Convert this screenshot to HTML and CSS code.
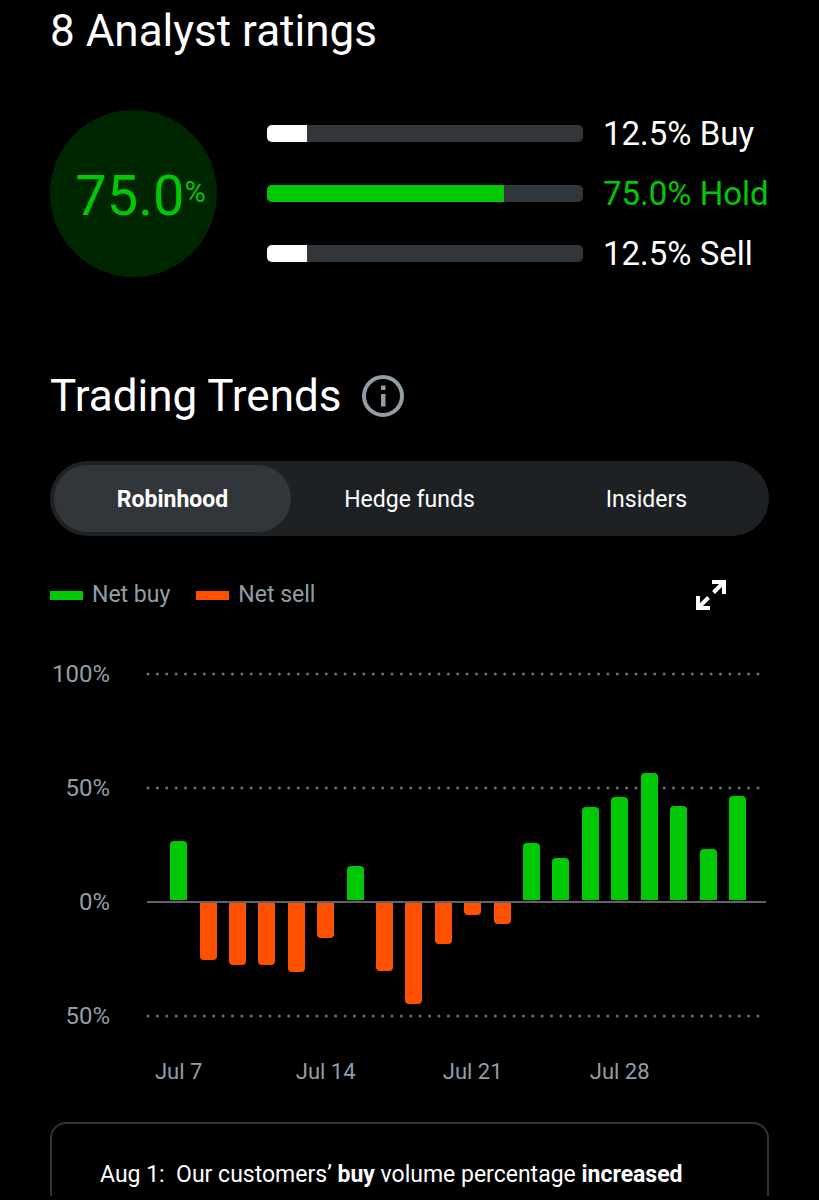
FILE: index.html
```html
<!DOCTYPE html>
<html lang="en">
<head>
    <meta charset="UTF-8">
    <meta name="viewport" content="width=device-width, initial-scale=1.0">
    <title>Analyst ratings</title>
    <link rel="stylesheet" href="styles.css">
</head>
<body>
    <main class="container">
        <section class="ratings">
            <h2 class="title">8 Analyst ratings</h2>
            <div class="ratings-body">
                <div class="score">75.0<span class="score-unit">%</span></div>
                <div class="rating-list">
                    <div class="track"><div class="fill" style="width: 12.5%"></div></div>
                    <span class="rating-label">12.5% Buy</span>
                    <div class="track"><div class="fill fill-top" style="width: 75%"></div></div>
                    <span class="rating-label rating-label-top">75.0% Hold</span>
                    <div class="track"><div class="fill" style="width: 12.5%"></div></div>
                    <span class="rating-label">12.5% Sell</span>
                </div>
            </div>
        </section>

        <section class="trends">
            <div class="trends-header">
                <h2 class="title">Trading Trends</h2>
                <button class="icon-btn" aria-label="About trading trends">
                    <svg width="42" height="42" viewBox="0 0 42 42">
                        <circle cx="21" cy="21" r="19" fill="none" stroke="#919ea6" stroke-width="4"/>
                        <path d="M19 10.500h4.500v4.500h-4.500zM19 19h4.500v12.500h-4.500z" fill="#919ea6"/>
                    </svg>
                </button>
            </div>

            <div class="tabs" role="tablist">
                <button class="tab active" role="tab" aria-selected="true">Robinhood</button>
                <button class="tab" role="tab" aria-selected="false">Hedge funds</button>
                <button class="tab" role="tab" aria-selected="false">Insiders</button>
            </div>

            <div class="legend">
                <span class="legend-item"><span class="swatch buy"></span>Net buy</span>
                <span class="legend-item"><span class="swatch sell"></span>Net sell</span>
                <button class="icon-btn expand" aria-label="Expand chart">
                    <svg width="30" height="30" viewBox="0 0 30 30" fill="none" stroke="#fff" stroke-width="4">
                        <path d="M16 2h12v12M28 2L17.500 12.500M2 16v12h12M2 28l10.500-10.500"/>
                    </svg>
                </button>
            </div>

            <div class="chart">
                <div class="grid-row">
                    <span class="y-label">100%</span>
                    <svg class="dots"><line x1="1" y1="2" x2="100%" y2="2" pathLength="65"/></svg>
                </div>
                <div class="grid-row">
                    <span class="y-label">50%</span>
                    <svg class="dots"><line x1="1" y1="2" x2="100%" y2="2" pathLength="65"/></svg>
                </div>
                <div class="grid-row">
                    <span class="y-label">0%</span>
                    <div class="axis"></div>
                </div>
                <div class="grid-row">
                    <span class="y-label">50%</span>
                    <svg class="dots"><line x1="1" y1="2" x2="100%" y2="2" pathLength="65"/></svg>
                </div>
                <div class="bars" id="bars"></div>
            </div>

            <div class="x-labels">
                <div class="week"><span>Jul 7</span></div>
                <div class="week"><span>Jul 14</span></div>
                <div class="week"><span>Jul 21</span></div>
                <div class="week"><span>Jul 28</span></div>
            </div>
        </section>

        <section class="card">
            <p>Aug 1:&nbsp; Our customers’ <strong>buy</strong> volume percentage <strong>increased</strong></p>
        </section>
    </main>

    <script>
        // Net volume per trading day, in percent
        const volumes = [
            26, -25, -27.5, -27.5, -30.4,
            -15.6, 15, -30.2, -44.8, -18,
            -5.4, -9.4, 25.4, 18.4, 41,
            45.6, 56, 41.4, 22.4, 46
        ];

        function renderBars() {
            // The upper half covers 100%, the lower half 50%
            document.getElementById('bars').innerHTML = volumes.map(v => `
                <div class="day">
                    <div class="half half-up">${v > 0 ? `<div class="bar buy" style="height: ${v}%"></div>` : ''}</div>
                    <div class="half half-down">${v < 0 ? `<div class="bar sell" style="height: ${-v * 2}%"></div>` : ''}</div>
                </div>
            `).join('');
        }

        renderBars();
    </script>
</body>
</html>
```
FILE: styles.css
```css
* {
    margin: 0;
    padding: 0;
    box-sizing: border-box;
}

body {
    background: #000;
    color: #fff;
    font-family: Roboto, sans-serif;
    font-size: 23px;
    line-height: 32px;
}

button {
    font: inherit;
    color: inherit;
    background: none;
    border: none;
    cursor: pointer;
}

svg {
    display: block;
}

.container {
    padding: 3px 50px 4px;
}

.title {
    font-size: 44px;
    line-height: 56px;
    font-weight: 400;
}

.ratings-body {
    display: flex;
    align-items: center;
    gap: 50px;
    margin-top: 44px;
}

.score {
    display: flex;
    flex: none;
    align-items: center;
    justify-content: center;
    width: 167px;
    height: 167px;
    padding-top: 5px;
    padding-left: 14px;
    border-radius: 50%;
    background: #002600;
    color: #00c805;
    font-size: 56px;
    line-height: 64px;
}

.score-unit {
    font-size: 29px;
    line-height: 32px;
    margin-bottom: 8px;
}

.rating-list {
    display: grid;
    flex: 1;
    grid-template-columns: 1fr 166px;
    grid-auto-rows: 60px;
    column-gap: 20px;
    align-items: center;
}

.track {
    height: 17px;
    border-radius: 5px;
    background: #30363a;
    overflow: hidden;
}

.fill {
    height: 100%;
    background: #fff;
}

.fill-top {
    background: #00c805;
}

.rating-label {
    padding-top: 2px;
    font-size: 33px;
    white-space: nowrap;
}

.rating-label-top {
    color: #00c805;
}

.trends {
    margin-top: 85px;
}

.trends-header {
    display: flex;
    align-items: center;
    gap: 20px;
}

.tabs {
    display: flex;
    margin-top: 37px;
    padding: 4px;
    border-radius: 38px;
    background: #1e2124;
}

.tab {
    flex: 1;
    height: 67px;
    padding-top: 2px;
    border-radius: 34px;
}

.tab.active {
    background: #30363a;
    font-weight: 700;
}

.legend {
    display: flex;
    align-items: center;
    gap: 26px;
    margin-top: 43px;
    color: #919ea6;
}

.legend-item {
    display: flex;
    align-items: center;
    gap: 9px;
}

.swatch {
    width: 33px;
    height: 9px;
}

.buy {
    background: #00c805;
}

.sell {
    background: #ff5000;
}

.expand {
    margin-left: auto;
    margin-right: 43px;
}

.chart {
    position: relative;
    display: flex;
    flex-direction: column;
    gap: 82px;
    margin-top: 47px;
}

.grid-row {
    display: flex;
    align-items: center;
    gap: 37px;
    padding-right: 3px;
}

.y-label {
    width: 60px;
    color: #919ea6;
    font-size: 24px;
    text-align: right;
}

.dots {
    flex: 1;
    height: 4px;
    margin-right: 8px;
    overflow: visible;
    stroke: #6a7074;
    stroke-width: 3;
    stroke-linecap: round;
    stroke-dasharray: 0 1;
}

.axis {
    flex: 1;
    height: 2px;
    background: #5c6266;
}

/* Bars lie over the grid lines */
.bars {
    position: absolute;
    top: 16px;
    right: 3px;
    bottom: 16px;
    left: 97px;
    display: flex;
    padding: 0 14px 0 17px;
}

.day {
    flex: 1;
    display: flex;
    flex-direction: column;
    align-items: center;
}

.half {
    display: flex;
    width: 17px;
}

.half-up {
    flex: 2;
    align-items: flex-end;
    border-bottom: 2px solid transparent;
}

.half-down {
    flex: 1;
    align-items: flex-start;
    border-top: 1px solid transparent;
}

.bar {
    width: 100%;
}

.bar.buy {
    border-radius: 4px 4px 0 0;
}

.bar.sell {
    border-radius: 0 0 4px 4px;
}

.x-labels {
    display: flex;
    margin-top: 24px;
    padding: 0 17px 0 114px;
    color: #919ea6;
    font-size: 22px;
}

.week {
    flex: 1;
}

/* One trading day wide, so the date is centred under its bar */
.week span {
    display: flex;
    justify-content: center;
    width: 20%;
    white-space: nowrap;
}

.card {
    margin-top: 34px;
    padding: 35px 48px 5px;
    border: 2px solid #303436;
    border-bottom: none;
    border-radius: 16px 16px 0 0;
}
```
